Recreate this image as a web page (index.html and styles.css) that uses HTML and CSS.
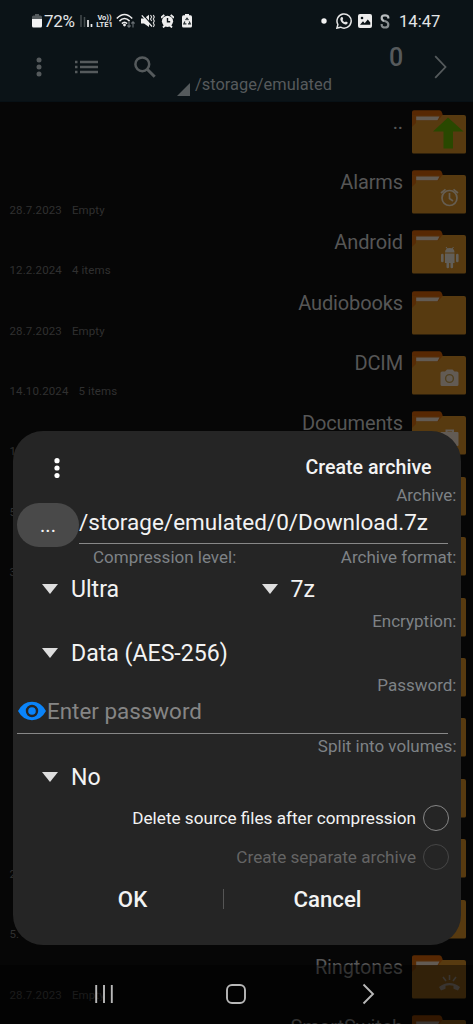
FILE: index.html
```
<!DOCTYPE html>
<html lang="en">
<head>
<meta charset="utf-8">
<title>Create archive</title>
<link rel="stylesheet" href="styles.css">
</head>
<body>
<svg class="defs" width="0" height="0">
  <symbol id="folder" viewBox="0 0 54 44">
    <path d="M0 2Q0 .3 2 .3H27.500Q29.500.3 30.200 3L31.500 8H0Z" fill="#572803"/>
    <path d="M0 16V5H31L32 5H52Q54 5 54 7V42Q54 43.500 52.500 43.500H1.500Q0 43.500 0 42Z" fill="#573a10"/>
    <path d="M0 5H30.500L26 10.500H4V13L0 17Z" fill="#572803" opacity=".75"/>
    <path d="M4.200 6.500H27.500L25.500 10.300H4.200Z" fill="#625b54"/>
  </symbol>
  <symbol id="caret" viewBox="0 0 16 10"><path d="M0 0H16L8 10Z" fill="#dedede"/></symbol>
</svg>
<div class="screen">
  <header class="header">
    <div class="status">
      <svg width="10" height="14" viewBox="0 0 10 14"><path d="M3 0H7V1.500H8.500Q10 1.500 10 3V6H0V3Q0 1.500 1.500 1.500H3Z" fill="#555b5e"/><path d="M0 5H10V12Q10 13.500 8.500 13.500H1.500Q0 13.500 0 12Z" fill="#f2f2f2"/></svg>
      <span class="percent">72%</span>
      <svg class="signal" width="13" height="14" viewBox="0 0 13 14"><path d="M1 1V13M4.500 3V13" stroke="#444b4e" stroke-width="1.500"/><path d="M8 6V13M11.500 10V13" stroke="#eee" stroke-width="1.700"/></svg>
      <span class="lte"><span>Vo))</span><span>LTE1</span></span>
      <svg class="wifi" width="20" height="16" viewBox="0 0 20 16"><g fill="none" stroke="#ededed" stroke-width="1.600"><path d="M.8 5.500Q8.500-2.500 16.200 5.500M3.400 8.100Q8.500 3 13.600 8.100M5.900 10.600Q8.500 8 11.100 10.600"/></g><circle cx="8.500" cy="12" r="1.400" fill="#eee"/><path d="M13 9V14M11.400 12.500L13 14.200L14.600 12.500M17 14.500V9M15.400 10.500L17 8.800L18.600 10.500" fill="none" stroke="#697074" stroke-width="1.100"/></svg>
      <svg class="mute" width="14" height="14" viewBox="0 0 14 14"><path d="M0 4.500H3L8 .8V13L3 9.500H0Z" fill="#eee"/><path d="M1.800 .6L11.500 11.500" stroke="#0b1317" stroke-width="1.200"/><path d="M.8 1.400L11 12.500" stroke="#eee" stroke-width="1.300"/><path d="M9.500 1L10.700 3L9.500 5L10.700 7M12.300 1L13.300 3L12.300 5L13.300 7L12.300 9L13.300 11L12.300 13" fill="none" stroke="#ddd" stroke-width="1.100"/></svg>
      <svg class="alarm" width="13" height="14" viewBox="0 0 13 14"><path d="M0 3.800L3.300.8M13 3.800L9.700.8M2 13.500L4 11.500M11 13.500L9 11.500" stroke="#eee" stroke-width="1.800"/><circle cx="6.500" cy="7.300" r="5.600" fill="#eee"/><path d="M6.500 4V7.700H9.200" fill="none" stroke="#0b1317" stroke-width="1.400"/></svg>
      <svg class="recycle" width="10" height="14" viewBox="0 0 10 14"><path d="M3 0H7V1.300H8.500Q10 1.300 10 3V12Q10 13.600 8.500 13.600H1.500Q0 13.600 0 12V3Q0 1.300 1.500 1.300H3Z" fill="#eee"/><path d="M3.600 6.200L5 4.200L6.400 6.200M7.200 7.400L8.300 9.800H6M4.400 9.800H1.800L2.900 7.400" fill="none" stroke="#222b2e" stroke-width="1.200"/></svg>
      <span class="grow"></span>
      <svg width="6" height="6" viewBox="0 0 6 6"><circle cx="3" cy="3" r="2.700" fill="#f2f2f2"/></svg>
      <svg class="wa" width="16" height="16" viewBox="0 0 16 16"><path d="M.9 15.100L1.900 11.500A7.100 7.100 0 1 1 4.600 14.200Z" fill="none" stroke="#e6e6e6" stroke-width="1.500"/><path d="M5.500 4.100L6.700 4.300L7.200 6L6.500 6.900Q7.300 8.500 9 9.300L9.900 8.600L11.600 9.300L11.500 10.600Q10.700 11.800 9.300 11.500Q5.300 10.300 4.300 6.500Q4.200 4.900 5.500 4.100Z" fill="#e6e6e6"/></svg>
      <svg class="pic" width="14" height="14" viewBox="0 0 14 14"><rect width="14" height="14" rx="2" fill="#ececec"/><circle cx="4" cy="4" r="1.300" fill="#0b1317"/><path d="M2 10.800L5 7.300L6.700 9.200L9.800 5.400L12.300 8.500V10.800Z" fill="#0b1317"/></svg>
      <svg class="ess" width="10" height="15" viewBox="0 0 10 15"><path d="M8.300 4.500V3.600Q8.300 1.300 5 1.300T1.700 4Q1.700 6.300 4.200 7" fill="none" stroke="#b9bdbf" stroke-width="2.200"/><path d="M4 6.800L6 7.500Q8.300 8.400 8.300 10.700Q8.300 13.500 5 13.500T1.700 11V10" fill="none" stroke="#858b8e" stroke-width="2.200"/></svg>
      <span class="clock">14:47</span>
    </div>
    <div class="toolbar">
      <svg class="menu" width="6" height="20" viewBox="0 0 6 20"><g fill="#555a5c"><circle cx="3" cy="2.900" r="2.500"/><circle cx="3" cy="10" r="2.500"/><circle cx="3" cy="17.100" r="2.500"/></g></svg>
      <svg class="listicon" width="23" height="14" viewBox="0 0 23 14"><path d="M0 2H2.500M0 7H2.500M0 12H2.500M5 2H23M5 7H23M5 12H23" stroke="#555a5c" stroke-width="2.400"/></svg>
      <svg class="search" width="22" height="22" viewBox="0 0 22 22"><circle cx="8.300" cy="8.300" r="6.900" fill="none" stroke="#555a5c" stroke-width="2.500"/><path d="M13.200 13.200L20.700 20.700" stroke="#555a5c" stroke-width="3"/></svg>
      <div class="path"><svg width="13" height="13" viewBox="0 0 13 13"><path d="M13 0V13H0Z" fill="#555a5c"/></svg><span>/storage/emulated</span></div>
      <span class="count">0</span>
      <svg class="next" width="13" height="24" viewBox="0 0 13 24"><path d="M1.200 1.200L11.500 12L1.200 22.800" fill="none" stroke="#555a5c" stroke-width="1.800"/></svg>
    </div>
  </header>

  <main class="files">
    <div class="row"><span class="meta"></span><span class="name">..</span><div class="icon"><svg class="folder"><use href="#folder"/></svg><svg class="badge" width="54" height="44" viewBox="0 0 54 44"><path d="M36 7.500L51.500 21.500H41V38.500H31.500V21.500H21Z" fill="#294800"/></svg></div></div>
    <div class="row"><span class="meta"><span>28.7.2023</span><span>Empty</span></span><span class="name">Alarms</span><div class="icon"><svg class="folder"><use href="#folder"/></svg><svg class="badge" width="54" height="44" viewBox="0 0 54 44"><g fill="none" stroke="#665e52" stroke-width="1.700"><circle cx="37.500" cy="28" r="7.500"/><path d="M37.500 23V28.500L41 31M29 23L33.500 19.300M46 23L41.500 19.300"/></g></svg></div></div>
    <div class="row"><span class="meta"><span>12.2.2024</span><span>4 items</span></span><span class="name">Android</span><div class="icon"><svg class="folder"><use href="#folder"/></svg><svg class="badge" width="54" height="44" viewBox="0 0 54 44"><path d="M33 22.500Q33 18 37.800 18T42.500 22.500ZM33 23.500H42.500V33H33Z" fill="#625e58"/><path d="M30.300 25V31M45.300 25V31M35.800 32V37M39.800 32V37" stroke="#625e58" stroke-width="2.600" stroke-linecap="round"/><path d="M34 17L35.500 19M41.500 17L40 19" stroke="#625e58"/></svg></div></div>
    <div class="row"><span class="meta"><span>28.7.2023</span><span>Empty</span></span><span class="name">Audiobooks</span><div class="icon"><svg class="folder"><use href="#folder"/></svg></div></div>
    <div class="row"><span class="meta"><span>14.10.2024</span><span>5 items</span></span><span class="name">DCIM</span><div class="icon"><svg class="folder"><use href="#folder"/></svg><svg class="badge" width="54" height="44" viewBox="0 0 54 44"><path d="M30 20.500H33L35 18.500H40.500L42.500 20.500H45Q46.500 20.500 46.500 22V33.500Q46.500 35 45 35H30Q28.500 35 28.500 33.500V22Q28.500 20.500 30 20.500Z" fill="#625b54"/><circle cx="37.500" cy="27.500" r="3.900" fill="#625b54" stroke="#51401f" stroke-width="1.400"/></svg></div></div>
    <div class="row"><span class="meta"><span>12.2.2024</span></span><span class="name">Documents</span><div class="icon"><svg class="folder"><use href="#folder"/></svg><svg class="badge" width="54" height="44" viewBox="0 0 54 44"><path d="M34.500 22V19.500H41V22" fill="none" stroke="#625b54" stroke-width="2"/><rect x="28.500" y="21" width="18" height="14" rx="1" fill="#625b54"/></svg></div></div>
    <div class="row"><span class="meta">5.</span><span class="name"></span><div class="icon"><svg class="folder"><use href="#folder"/></svg></div></div>
    <div class="row"><span class="meta">3.</span><span class="name"></span><div class="icon"><svg class="folder"><use href="#folder"/></svg></div></div>
    <div class="row"><span class="meta"></span><span class="name"></span><div class="icon"><svg class="folder"><use href="#folder"/></svg></div></div>
    <div class="row"><span class="meta"></span><span class="name"></span><div class="icon"><svg class="folder"><use href="#folder"/></svg></div></div>
    <div class="row"><span class="meta"></span><span class="name"></span><div class="icon"><svg class="folder"><use href="#folder"/></svg></div></div>
    <div class="row"><span class="meta"></span><span class="name"></span><div class="icon"><svg class="folder"><use href="#folder"/></svg></div></div>
    <div class="row"><span class="meta">2.</span><span class="name"></span><div class="icon"><svg class="folder"><use href="#folder"/></svg></div></div>
    <div class="row"><span class="meta">5.</span><span class="name"></span><div class="icon"><svg class="folder"><use href="#folder"/></svg></div></div>
    <div class="row"><span class="meta"><span>28.7.2023</span><span>Empty</span></span><span class="name">Ringtones</span><div class="icon"><svg class="folder"><use href="#folder"/></svg><svg class="badge" width="54" height="44" viewBox="0 0 54 44"><path d="M27 32Q37.500 24 48 32L46 35.500L41.500 33.800V30.800Q37.500 29.500 33.500 30.800V33.800L29 35.500Z" fill="#625b54"/><path d="M37.500 20V25M31 22L34 26M44 22L41 26" stroke="#625b54" stroke-width="1.600"/></svg></div></div>
    <div class="row"><span class="meta"></span><span class="name">SmartSwitch</span><div class="icon"><svg class="folder"><use href="#folder"/></svg></div></div>
  </main>

  <section class="dialog">
    <div class="titlebar">
      <svg width="6" height="20" viewBox="0 0 6 20"><g fill="#fff"><circle cx="3" cy="2.700" r="2.600"/><circle cx="3" cy="10" r="2.600"/><circle cx="3" cy="17.500" r="2.600"/></g></svg>
      <h1>Create archive</h1>
    </div>
    <div class="label tight">Archive:</div>
    <div class="pathfield"><button class="browse">...</button><div class="input">/storage/emulated/0/Download.7z</div></div>
    <div class="label pair"><span>Compression level:</span><span>Archive format:</span></div>
    <div class="selects"><div class="select first"><svg width="16" height="10"><use href="#caret"/></svg><span>Ultra</span></div><div class="select"><svg width="16" height="10"><use href="#caret"/></svg><span>7z</span></div></div>
    <div class="label">Encryption:</div>
    <div class="selects"><div class="select"><svg width="16" height="10"><use href="#caret"/></svg><span>Data (AES-256)</span></div></div>
    <div class="label">Password:</div>
    <div class="password">
      <svg width="28" height="20" viewBox="0 0 28 20"><path fill-rule="evenodd" d="M0 10Q5 .8 14 .8T28 10Q23 19.200 14 19.200T0 10ZM14 3.800A6.200 6.200 0 1 0 14 16.200A6.200 6.200 0 1 0 14 3.800Z" fill="#0a84fa"/><circle cx="14" cy="10" r="3.800" fill="#0a84fa"/></svg>
      <span>Enter password</span>
    </div>
    <div class="label">Split into volumes:</div>
    <div class="selects last"><div class="select"><svg width="16" height="10"><use href="#caret"/></svg><span>No</span></div></div>
    <div class="check"><span>Delete source files after compression</span><i></i></div>
    <div class="check off"><span>Create separate archive</span><i></i></div>
    <div class="actions"><button class="ok">OK</button><span class="divider"></span><button class="cancel">Cancel</button></div>
  </section>

  <nav class="nav">
    <svg width="18" height="20" viewBox="0 0 18 20"><path d="M1.200 1V19M9 1V19M16.800 1V19" stroke="#b8b8b8" stroke-width="1.900"/></svg>
    <svg width="20" height="20" viewBox="0 0 20 20"><rect x="1" y="1" width="18" height="18" rx="5" fill="none" stroke="#b8b8b8" stroke-width="1.900"/></svg>
    <svg width="13" height="22" viewBox="0 0 13 22"><path d="M1.500 1.500L11 11L1.500 20.500" fill="none" stroke="#b8b8b8" stroke-width="1.900"/></svg>
  </nav>
</div>
</body>
</html>
```
FILE: styles.css
```
* { box-sizing: border-box; }
body { margin: 0; background: #060606; font-family: Roboto, "Noto Sans", sans-serif; }
svg { display: block; flex: none; }
button { border: 0; padding: 0; background: none; color: inherit; font: inherit; }
.defs { position: absolute; }
.screen { position: relative; width: 473px; height: 1024px; overflow: hidden; background: #060606; }

.header { height: 102px; background: #0b1317; border-bottom: 1px solid #071015; }
.status { display: flex; align-items: center; height: 42px; padding: 0 33px 0 32px; color: #e4e6e7; }
.percent { margin-left: 2px; width: 32px; font-size: 17px; letter-spacing: -.3px; white-space: nowrap; }
.signal { margin-left: 4px; }
.lte { display: flex; flex-direction: column; width: 17px; margin-left: 3px; font-size: 7.5px; line-height: 7px; font-weight: 700; text-align: center; white-space: nowrap; }
.wifi { margin-left: 3px; }
.mute { margin-left: 5px; }
.alarm { margin-left: 6px; }
.recycle { margin-left: 8px; }
.grow { flex: 1; }
.wa { margin-left: 9px; }
.pic { margin-left: 6px; }
.ess { margin-left: 8px; }
.clock { margin-left: 9px; width: 41px; font-size: 16.6px; white-space: nowrap; }

.toolbar { display: flex; align-items: center; height: 50px; padding: 0 26px 0 36px; color: #565a5c; }
.listicon { margin-left: 33px; }
.search { margin-left: 36px; }
.path { display: flex; align-items: flex-end; align-self: flex-end; margin: 0 0 -4px 21px; width: 154px; gap: 5px; font-size: 16.4px; }
.path span { line-height: 20px; margin-bottom: 1px; white-space: nowrap; }
.count { width: 16px; margin: -18px 29px 0 58px; font-size: 25px; font-weight: 500; line-height: 28px; }

.files { display: flex; flex-direction: column; }
.row { display: flex; flex: none; height: 60.4px; padding: 7.5px 7.5px 0 9.5px; }
.meta { display: flex; align-self: flex-end; gap: 10px; margin-bottom: 6px; font-size: 11.5px; letter-spacing: .12px; line-height: 14px; color: #303030; }
.name { margin-left: auto; margin-right: 8.5px; font-size: 20px; letter-spacing: -.12px; line-height: 25px; color: #565656; }
.icon { position: relative; width: 54px; height: 44px; }
.folder { width: 54px; height: 44px; }
.badge { position: absolute; left: 0; top: 0; }

.dialog { position: absolute; left: 12.5px; top: 431px; width: 448.500px; height: 514px; padding: 17px 4.5px 0; border-radius: 30px; background: #252525; color: #f3f3f3; }
.titlebar { display: flex; align-items: center; justify-content: space-between; height: 39px; padding: 0 25px 0 37px; }
.titlebar h1 { margin: 0; font-size: 19.6px; font-weight: 500; line-height: 24px; }
.label { height: 20px; line-height: 20px; font-size: 17px; text-align: right; color: #7e8286; }
.label.tight { height: 16px; line-height: 16px; }
.label.pair { display: flex; justify-content: space-between; padding-left: 76px; }
.pathfield { display: flex; height: 44px; }
.browse { width: 62px; height: 44px; border-radius: 22px; background: #494949; font-size: 20px; line-height: 44px; }
.input { width: 369px; height: 41px; border-bottom: 1.5px solid #888; font-size: 22.5px; line-height: 38px; white-space: nowrap; }
.selects { display: flex; height: 44px; padding-left: 25px; font-size: 23.1px; }
.selects.last { height: 42px; }
.select { display: flex; align-items: center; gap: 13px; }
.select.first { width: 219.5px; }
.password { display: flex; align-items: center; gap: 1px; width: 431px; height: 39px; margin-bottom: 2px; padding: 0 0 7px 1px; border-bottom: 1.5px solid #888; font-size: 22.4px; color: #858585; }
.check { display: flex; align-items: center; justify-content: flex-end; gap: 7px; height: 39.5px; padding-right: 7.5px; font-size: 17.15px; }
.check i { width: 26px; height: 26px; border: 1.3px solid #858585; border-radius: 50%; }
.check.off { color: #646464; }
.check.off i { border-color: #464646; }
.actions { display: flex; align-items: center; height: 44px; font-size: 22.2px; font-weight: 500; }
.ok, .cancel { line-height: 30px; }
.ok { width: 206px; padding-left: 25px; }
.divider { width: 1px; height: 20px; background: #555; }
.cancel { width: 207px; }

.nav { position: absolute; left: 0; bottom: 0; width: 473px; height: 59px; display: flex; align-items: center; justify-content: space-between; padding: 0 98px 2px 95px; background: rgba(0,0,0,.42); }
.nav svg:nth-child(2) { margin-right: 3px; }
```
